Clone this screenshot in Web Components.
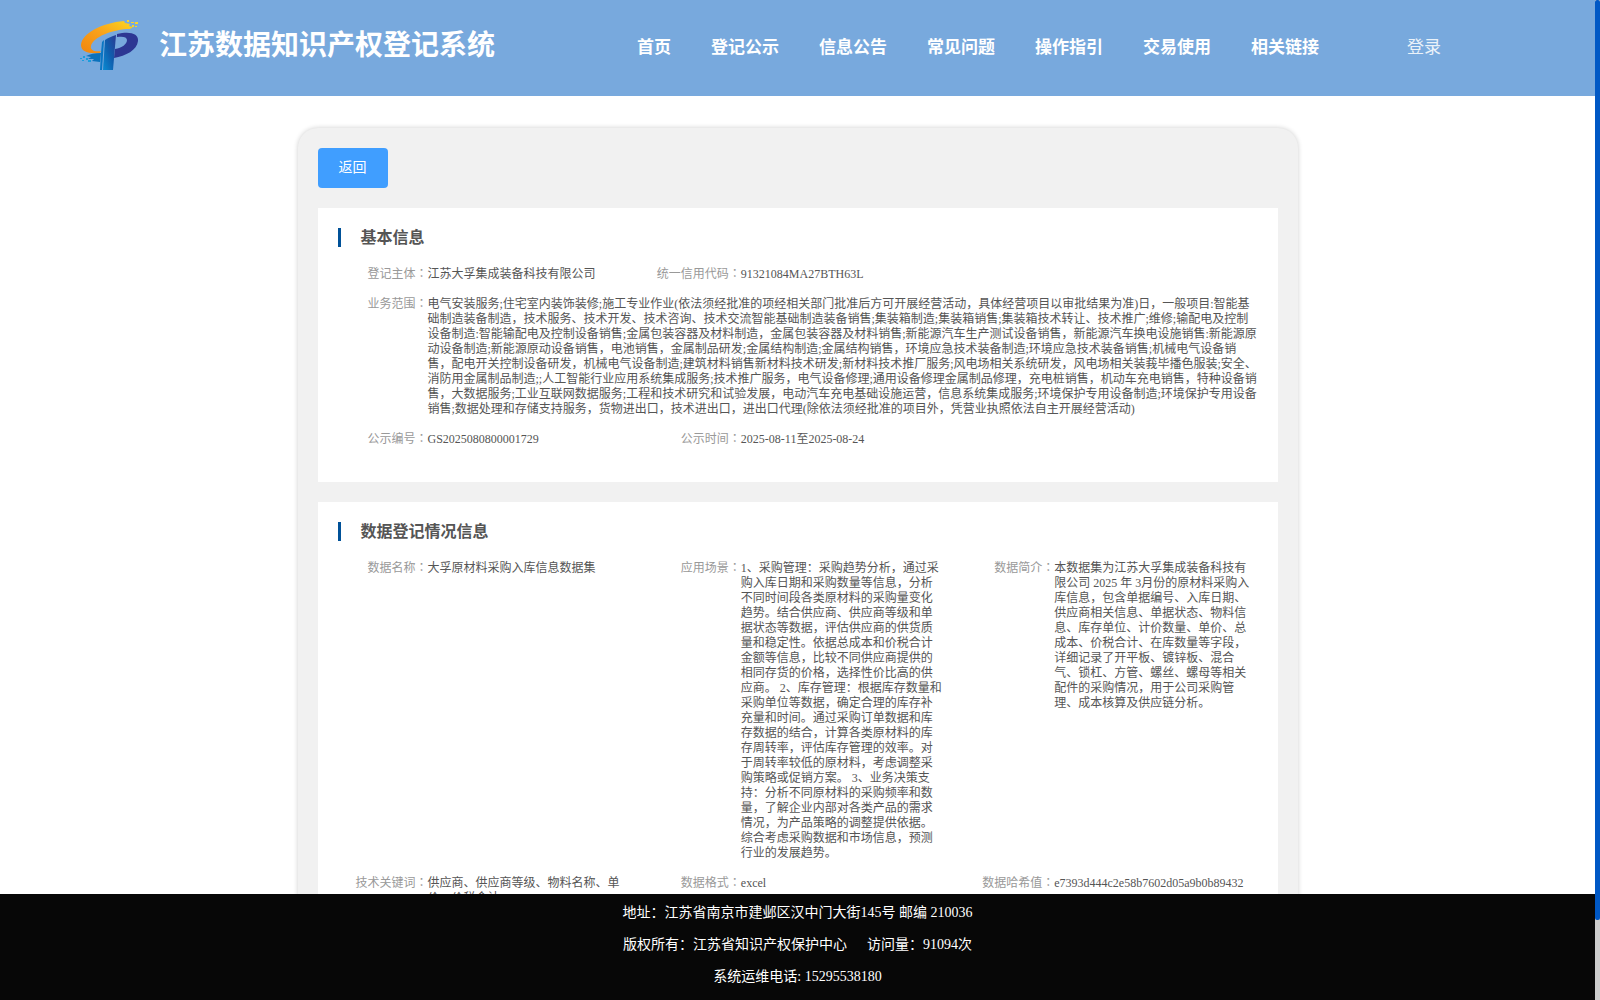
<!DOCTYPE html>
<html lang="zh-CN">
<head>
<meta charset="utf-8">
<title>江苏数据知识产权登记系统</title>
<style>
  body { margin: 0; font-family: "Liberation Serif", "Noto Sans CJK SC", serif; color: #555; background: #fff; }
</style>
</head>
<body>
<app-shell>
  <site-header slot="header">
    <nav-link>首页</nav-link>
    <nav-link>登记公示</nav-link>
    <nav-link>信息公告</nav-link>
    <nav-link>常见问题</nav-link>
    <nav-link>操作指引</nav-link>
    <nav-link>交易使用</nav-link>
    <nav-link>相关链接</nav-link>
  </site-header>
  <detail-card>
    <info-panel heading="基本信息">
      <info-item label="登记主体">江苏大孚集成装备科技有限公司</info-item>
      <info-item label="统一信用代码">91321084MA27BTH63L</info-item>
      <info-item label="业务范围" wide>电气安装服务;住宅室内装饰装修;施工专业作业(依法须经批准的项经相关部门批准后方可开展经营活动，具体经营项目以审批结果为准)日，一般项目:智能基础制造装备制造，技术服务、技术开发、技术咨询、技术交流智能基础制造装备销售;集装箱制造;集装箱销售;集装箱技术转让、技术推广;维修;输配电及控制设备制造:智能输配电及控制设备销售;金属包装容器及材料制造，金属包装容器及材料销售;新能源汽车生产测试设备销售，新能源汽车换电设施销售:新能源原动设备制造;新能源原动设备销售，电池销售，金属制品研发;金属结构制造;金属结构销售，环境应急技术装备制造;环境应急技术装备销售;机械电气设备销售，配电开关控制设备研发，机械电气设备制造;建筑材料销售新材料技术研发;新材料技术推厂服务;风电场相关系统研发，风电场相关装莪毕播色服装;安全、消防用金属制品制造;;人工智能行业应用系统集成服务;技术推广服务，电气设备修理;通用设备修理金属制品修理，充电桩销售，机动车充电销售，特种设备销售，大数据服务;工业互联网数据服务;工程和技术研究和试验发展，电动汽车充电基础设施运营，信息系统集成服务;环境保护专用设备制造;环境保护专用设备销售;数据处理和存储支持服务，货物进出口，技术进出口，进出口代理(除依法须经批准的项目外，凭营业执照依法自主开展经营活动)</info-item>
      <info-item label="公示编号">GS2025080800001729</info-item>
      <info-item label="公示时间">2025-08-11至2025-08-24</info-item>
    </info-panel>
    <info-panel heading="数据登记情况信息">
      <info-item label="数据名称">大孚原材料采购入库信息数据集</info-item>
      <info-item label="应用场景">1、采购管理：采购趋势分析，通过采购入库日期和采购数量等信息，分析不同时间段各类原材料的采购量变化趋势。结合供应商、供应商等级和单据状态等数据，评估供应商的供货质量和稳定性。依据总成本和价税合计金额等信息，比较不同供应商提供的相同存货的价格，选择性价比高的供应商。 2、库存管理：根据库存数量和采购单位等数据，确定合理的库存补充量和时间。通过采购订单数据和库存数据的结合，计算各类原材料的库存周转率，评估库存管理的效率。对于周转率较低的原材料，考虑调整采购策略或促销方案。 3、业务决策支持：分析不同原材料的采购频率和数量，了解企业内部对各类产品的需求情况，为产品策略的调整提供依据。综合考虑采购数据和市场信息，预测行业的发展趋势。</info-item>
      <info-item label="数据简介">本数据集为江苏大孚集成装备科技有限公司 2025 年 3月份的原材料采购入库信息，包含单据编号、入库日期、供应商相关信息、单据状态、物料信息、库存单位、计价数量、单价、总成本、价税合计、在库数量等字段，详细记录了开平板、镀锌板、混合气、锁杠、方管、螺丝、螺母等相关配件的采购情况，用于公司采购管理、成本核算及供应链分析。</info-item>
      <info-item label="技术关键词">供应商、供应商等级、物料名称、单价、价税合计</info-item>
      <info-item label="数据格式">excel</info-item>
      <info-item label="数据哈希值">e7393d444c2e58b7602d05a9b0b89432</info-item>
    </info-panel>
  </detail-card>
  <site-footer slot="footer"></site-footer>
</app-shell>

<script>
const define = (name, html) => {
  const tpl = document.createElement('template');
  tpl.innerHTML = html;
  customElements.define(name, class extends HTMLElement {
    constructor() {
      super();
      const root = this.attachShadow({ mode: 'open' });
      root.append(tpl.content.cloneNode(true));
      root.querySelectorAll('[data-attr]').forEach(el => {
        el.textContent = this.getAttribute(el.dataset.attr);
      });
    }
  });
};

define('app-shell', `
<style>
  :host { display: flex; height: 100vh; overflow: hidden; }
  .page { flex: 1; min-width: 0; display: flex; flex-direction: column; }
  main { flex: 1; min-height: 0; overflow: hidden; }
  .track { flex: 0 0 5px; background: #ccc; }
  .thumb { height: 92%; background: #0058c5; border-radius: 2px; }
</style>
<div class="page">
  <slot name="header"></slot>
  <main><slot></slot></main>
  <slot name="footer"></slot>
</div>
<div class="track"><div class="thumb"></div></div>`);

define('brand-logo', `
<style>:host { display: block; } svg { display: block; }</style>
<svg width="60" height="52" viewBox="0 0 60 52" aria-hidden="true">
  <defs>
    <linearGradient id="o" x1="0" y1="1" x2="1" y2="0"><stop offset="0" stop-color="#f0850f"/><stop offset=".5" stop-color="#f9a11b"/><stop offset="1" stop-color="#fbd71e"/></linearGradient>
    <linearGradient id="b" x1="0" y1="1" x2="1" y2="0"><stop offset="0" stop-color="#0a8bd2"/><stop offset=".5" stop-color="#0f5eae"/><stop offset="1" stop-color="#2b3a93"/></linearGradient>
  </defs>
  <path d="M44 1C22 3 2 13 1 25c0 6 6 9 19 8 0-1 0-1 1-2-7 1-11-1-10-5C13 17 33 9 50 9l3-2-4-1 1-2-5-1z" fill="url(#o)"/>
  <path d="M25 20c3-2 7-4 11-5L33 50H23z" fill="url(#b)"/>
  <path d="M22 22 24 20 22 50h-2l1-17z" fill="#0a76c4"/>
  <path d="M21 33C15 33 10 34 6 36l5 1-3 2 6 0-2 2 8 1z" fill="#0b72bd"/>
  <path d="M37 14c12-3 22-1 21 7-1 9-12 15-24 17l1-9c7-1 12-5 12-9 0-3-4-4-10-3z" fill="#2d3793"/>
  <g fill="#f9d42a"><path d="M47 0h2v2h-2zM51 2h3v1h-3zM55 2h3v2h-3zM52 5h2v2h-2zM55 6h2v1h-2z"/></g>
  <g fill="#1a9ddd"><path d="M3 36h2v2H3zM0 38h2v1H0zM6 38h2v2H6zM2 40h2v1H2zM8 40h3v2H8z"/></g>
</svg>`);

define('nav-link', `
<style>
  :host { display: block; }
  a { color: inherit; text-decoration: none; white-space: nowrap; }
</style>
<a href="#"><slot></slot></a>`);

define('site-header', `
<style>
  :host { display: block; flex: none; background: #78a9dd; color: #fff; }
  header { display: flex; align-items: center; height: 96px; padding: 0 154px 4px 80px; box-sizing: border-box; }
  h1 { margin: 0 0 0 19px; font-size: 28px; line-height: 40px; font-weight: bold; white-space: nowrap; }
  nav { display: flex; gap: 40px; margin: 4px 88px 0 auto; font-size: 17px; line-height: 24px; font-weight: bold; }
  .login { margin-top: 4px; font-size: 17px; line-height: 24px; opacity: .85; }
</style>
<header>
  <brand-logo></brand-logo>
  <h1>江苏数据知识产权登记系统</h1>
  <nav><slot></slot></nav>
  <nav-link class="login">登录</nav-link>
</header>`);

define('detail-card', `
<style>
  :host { display: flex; flex-direction: column; gap: 20px; box-sizing: border-box; max-width: 1000px; margin: 32px auto 0; padding: 20px; background: #f1f1f1; border-radius: 20px; box-shadow: 0 0 5px rgba(0,0,0,.2); }
  button { align-self: flex-start; height: 40px; padding: 0 21px; border: 0; border-radius: 4px; background: #409eff; color: #fff; font: inherit; font-size: 14px; line-height: 20px; }
</style>
<button type="button">返回</button>
<slot></slot>`);

define('info-panel', `
<style>
  :host { display: block; padding: 20px 20px 35px; background: #fff; }
  h2 { margin: 0 0 20px; padding-left: 20px; border-left: 3px solid #005198; font-size: 16px; line-height: 19px; font-weight: bold; }
  .items { display: grid; grid-template-columns: repeat(3, 1fr); gap: 15px 20px; }
</style>
<h2 data-attr="heading"></h2>
<div class="items"><slot></slot></div>`);

define('info-item', `
<style>
  :host { display: flex; min-width: 0; font-size: 12px; line-height: 15px; }
  :host([wide]) { grid-column: 1 / -1; }
  .label { flex: 0 0 90px; text-align: right; color: #999; white-space: nowrap; }
  .colon { font-family: "Liberation Serif", "Noto Sans CJK TC", sans-serif; line-height: 0; }
  .value { flex: 1; min-width: 0; }
</style>
<div class="label"><span data-attr="label"></span><span class="colon" lang="zh-TW">：</span></div>
<div class="value"><slot></slot></div>`);

define('site-footer', `
<style>
  :host { display: block; flex: none; background: #070707; color: #fff; }
  footer { padding: 3px 0 7px; text-align: center; font-size: 14px; line-height: 32px; }
  p { margin: 0; }
  .visits { margin-left: 20px; }
</style>
<footer>
  <p>地址：江苏省南京市建邺区汉中门大街145号 邮编 210036</p>
  <p>版权所有：江苏省知识产权保护中心<span class="visits">访问量：91094次</span></p>
  <p>系统运维电话: 15295538180</p>
</footer>`);
</script>
</body>
</html>
